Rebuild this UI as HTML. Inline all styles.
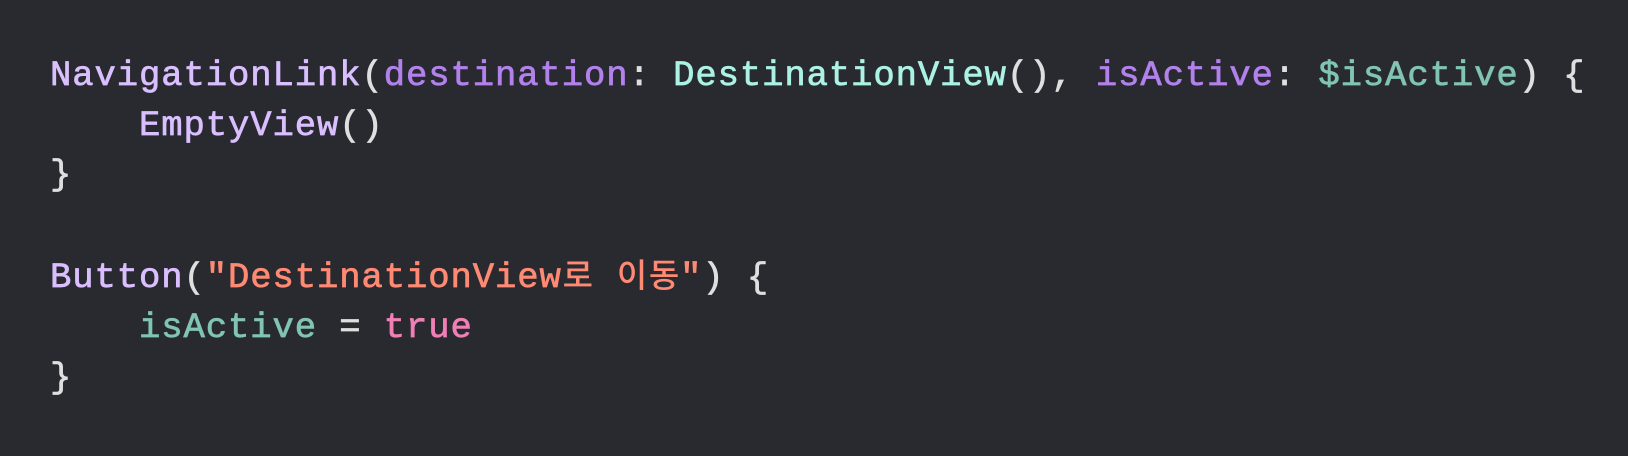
<!DOCTYPE html>
<html><head><meta charset="utf-8"><style>
html,body{margin:0;padding:0;background:#292a30;width:1628px;height:456px;overflow:hidden}
pre{margin:0;position:absolute;left:50px;top:51px;font-family:"Liberation Mono","Noto Sans CJK KR",monospace;font-size:35.6px;letter-spacing:0.9px;line-height:49.6px;color:#dfdfe0;white-space:pre;font-weight:normal;-webkit-text-stroke:0.7px currentColor}
.t{color:#dabfff}.p{color:#b281eb}.d{color:#acf2e4}.v{color:#81c4b4}.s{color:#ff8a74}.k{color:#f07fb5}
.ko{display:inline-block;width:32px;text-align:center;font-family:"Noto Sans CJK KR",sans-serif;font-size:33px;letter-spacing:0;font-weight:500;-webkit-text-stroke:0}
</style></head><body>
<pre><span class="t">NavigationLink</span>(<span class="p">destination</span>: <span class="d">DestinationView</span>(), <span class="p">isActive</span>: <span class="v">$isActive</span>) {
    <span class="t">EmptyView</span>()
}

<span class="t">Button</span>(<span class="s">"DestinationView<span class="ko">로</span> <span class="ko">이</span><span class="ko">동</span>"</span>) {
    <span class="v">isActive</span> = <span class="k">true</span>
}</pre>
</body></html>
